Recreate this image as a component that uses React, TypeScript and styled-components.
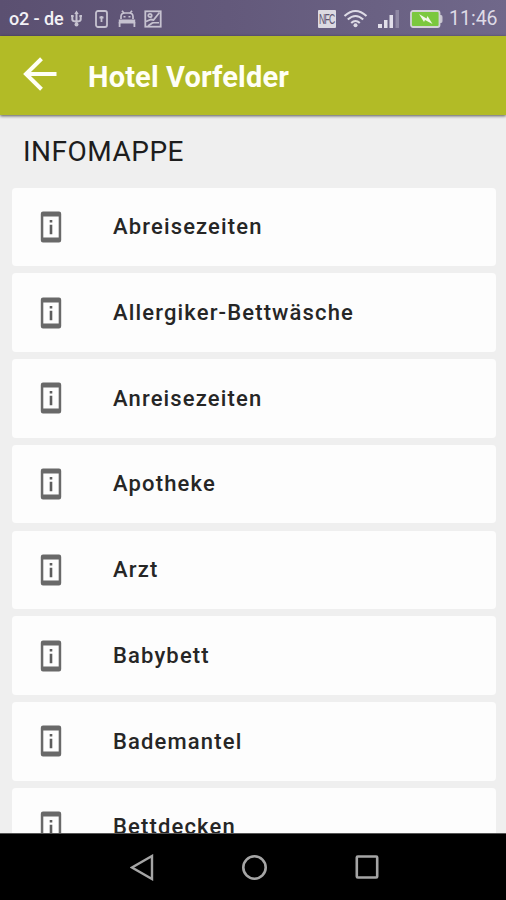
import React from "react";
import styled, { createGlobalStyle } from "styled-components";

const GlobalStyle = createGlobalStyle`
  * { box-sizing: border-box; }
  body { margin: 0; background: #000; }
`;

const Screen = styled.div`
  width: 506px;
  height: 900px;
  display: flex;
  flex-direction: column;
  overflow: hidden;
  background: #efefef;
  font-family: Roboto, "Liberation Sans", sans-serif;
`;

const StatusBar = styled.div`
  flex: 0 0 35.5px;
  display: flex;
  align-items: center;
  padding: 2px 8px 0 9px;
  background: linear-gradient(90deg, #5b5071 0%, #63597b 45%, #70688a 100%);
`;

const Carrier = styled.span`
  width: 60px;
  font-size: 18px;
  line-height: 20px;
  font-weight: 500;
  letter-spacing: -0.1px;
  color: #f3f1f6;
  white-space: nowrap;
`;

const Clock = styled.span`
  width: 49px;
  margin-left: 6px;
  font-size: 19.5px;
  line-height: 20px;
  color: #dedbe6;
  white-space: nowrap;
`;

const Glyph = styled.svg<{ $gap?: number }>`
  display: block;
  flex: none;
  margin-left: ${(p) => p.$gap ?? 0}px;
`;

const NfcBadge = styled.span`
  width: 18px;
  height: 18px;
  margin-left: auto;
  display: flex;
  align-items: center;
  justify-content: center;
  border-radius: 1px;
  background: #dcdae2;
  color: #5f5772;
  font: 12px/18px "Liberation Sans", sans-serif;
  letter-spacing: -1px;
`;

const NfcText = styled.span`
  transform: scaleX(0.72) scaleY(1.15);
`;

const AppBar = styled.header`
  flex: 0 0 79px;
  display: flex;
  align-items: center;
  padding-left: 23px;
  background: #b2bb26;
  box-shadow: 0 1px 3px rgba(0, 0, 0, 0.65);
  z-index: 1;
`;

const Title = styled.h1`
  margin: 4px 0 0 31px;
  font-size: 29px;
  line-height: 34px;
  font-weight: 700;
  letter-spacing: 0.15px;
  color: #fffff6;
  white-space: nowrap;
`;

const Content = styled.main`
  flex: 1;
  min-height: 0;
  overflow: hidden;
  padding: 0 10.5px 0 12px;
`;

const SectionTitle = styled.h2`
  height: 73px;
  margin: 0;
  padding: 0 0 0 11px;
  font-size: 28px;
  line-height: 73px;
  font-weight: 400;
  letter-spacing: 0.5px;
  color: #1d1d1d;
`;

const List = styled.div`
  display: flex;
  flex-direction: column;
  gap: 7.2px;
`;

const Card = styled.div`
  flex: 0 0 78.6px;
  display: flex;
  align-items: center;
  padding-left: 28px;
  border-radius: 4px;
  background: #fdfdfd;
`;

const Label = styled.span`
  margin: 0.4px 0 0 51px;
  font-size: 22px;
  line-height: 26px;
  font-weight: 500;
  letter-spacing: 1.15px;
  color: #262626;
  white-space: nowrap;
`;

const NavBar = styled.nav`
  flex: 0 0 67px;
  display: flex;
  align-items: center;
  padding-left: 130px;
  background: #000;
  border-top: 1px solid #555;
  z-index: 1;
`;

const InfoIcon = () => (
  <Glyph width="22" height="32" viewBox="0 0 22 32">
    <path
      fill="#696969"
      fillRule="evenodd"
      d="M3 .5h16a2.200 2.200 0 0 1 2.200 2.200v26.600A2.200 2.200 0 0 1 19 31.500H3A2.200 2.200 0 0 1 .8 29.300V2.700A2.200 2.200 0 0 1 3 .5ZM3.300 5.500v21h15.400v-21Z"
    />
    <path fill="#5c5c5c" d="M9.700 9h2.600v2.600H9.700zM9.700 13.800h2.600v9.400H9.700z" />
  </Glyph>
);

const items = [
  "Abreisezeiten",
  "Allergiker-Bettwäsche",
  "Anreisezeiten",
  "Apotheke",
  "Arzt",
  "Babybett",
  "Bademantel",
  "Bettdecken",
];

export default function App() {
  return (
    <Screen>
      <GlobalStyle />
      <StatusBar>
        <Carrier>o2 - de</Carrier>
        <Glyph $gap={1} width="13" height="18" viewBox="0 0 13 18" fill="none" stroke="#c6c2d0" strokeWidth="2">
          <path d="M6.500 3v11M2.300 6v3.500q0 2 4.200 2t4.200-2V6" />
          <path d="m4.300 4 2.200-3.500L8.700 4ZM1 5h2.600v2H1zM9.400 5H12v2H9.400z" fill="#c6c2d0" stroke="none" />
          <circle cx="6.500" cy="14.500" r="2" fill="#c6c2d0" stroke="none" />
        </Glyph>
        <Glyph $gap={12} width="13" height="18" viewBox="0 0 13 18" fill="none" stroke="#c6c2d0">
          <rect x="1" y="1" width="11" height="16" rx="2" strokeWidth="1.800" />
          <path d="M6.500 6V12M4.500 7.500h4" strokeWidth="1.800" />
        </Glyph>
        <Glyph $gap={10} width="18" height="18" viewBox="0 0 18 18" fill="none" stroke="#c6c2d0" strokeWidth="1.700">
          <path d="m4 .8 1.800 2.200M14 .8 12.200 3M3 9V6.500Q3 3 7 3h4q4 0 4 3.500V9" />
          <path d="M5.500 6h2v1.500h-2zM10.500 6h2v1.500h-2zM.8 9.500h16.400v4H.8z" fill="#c6c2d0" stroke="none" />
          <path d="M1.600 12v5M16.400 12v5" strokeWidth="1.800" />
        </Glyph>
        <Glyph $gap={8} width="18" height="18" viewBox="0 0 18 18" fill="none" stroke="#c6c2d0" strokeWidth="1.800">
          <rect x="1.300" y="1.300" width="15.400" height="15.400" />
          <path d="M2 11.500 7 9.500l2.500.5 6-7.500M4 16l5-3.500" />
          <circle cx="6" cy="5.500" r="1.700" />
          <path d="M9 12h6v1.500H9z" fill="#c6c2d0" stroke="none" />
        </Glyph>

        <NfcBadge><NfcText>NFC</NfcText></NfcBadge>
        <Glyph $gap={7} width="25" height="19" viewBox="0 0 25 19" fill="none" stroke="#dedbe6" strokeWidth="2.100">
          <path d="M1.500 7q11-10 22 0M4.800 10.500q7.700-7 15.400 0M8.200 14q4.300-4 8.600 0" />
          <circle cx="12.500" cy="16.300" r="2" fill="#dedbe6" stroke="none" />
        </Glyph>
        <Glyph $gap={10} width="22" height="18" viewBox="0 0 22 18" fill="#e2dfea">
          <path d="M0 14h4v4H0zM6 10h3.500v8H6zM11.500 5H15v13h-3.500z" />
          <path d="M17.500 0H21v18h-3.500z" opacity=".3" />
        </Glyph>
        <Glyph $gap={10} width="33" height="18" viewBox="0 0 33 18">
          <path d="M29 5h2q1.500 0 1.500 2v4q0 2-1.500 2h-2z" fill="#c9c6d0" />
          <rect x="1" y="1" width="28.500" height="16" rx="2" fill="#7bc83e" stroke="#d4d3d8" strokeWidth="1.800" />
          <path d="m9 4 7.500 4.500 1-2.500 5 8-7.500-4-1 2Z" fill="#f2f7e9" />
        </Glyph>
        <Clock>11:46</Clock>
      </StatusBar>
      <AppBar>
        <Glyph width="34" height="36" viewBox="0 0 34 36" fill="none" stroke="#fffff6" strokeWidth="4">
          <path d="M33.500 17H3M18.500 1.800 3 17l15.500 15.200" />
        </Glyph>
        <Title>Hotel Vorfelder</Title>
      </AppBar>
      <Content>
        <SectionTitle>INFOMAPPE</SectionTitle>
        <List>
          {items.map((item) => (
            <Card key={item}>
              <InfoIcon />
              <Label>{item}</Label>
            </Card>
          ))}
        </List>
      </Content>
      <NavBar>
        <Glyph width="24" height="27" viewBox="0 0 24 27" fill="none" stroke="#a5a5a5" strokeWidth="2.400">
          <path d="M22 2v23L2 13.500Z" />
        </Glyph>
        <Glyph $gap={87} width="27" height="27" viewBox="0 0 27 27" fill="none" stroke="#a5a5a5" strokeWidth="2.600">
          <circle cx="13.500" cy="13.500" r="11.200" />
        </Glyph>
        <Glyph $gap={87} width="24" height="25" viewBox="0 0 24 25" fill="none" stroke="#a5a5a5" strokeWidth="2.600">
          <rect x="1.800" y="1.500" width="20.400" height="21" rx="1" />
        </Glyph>
      </NavBar>
    </Screen>
  );
}
